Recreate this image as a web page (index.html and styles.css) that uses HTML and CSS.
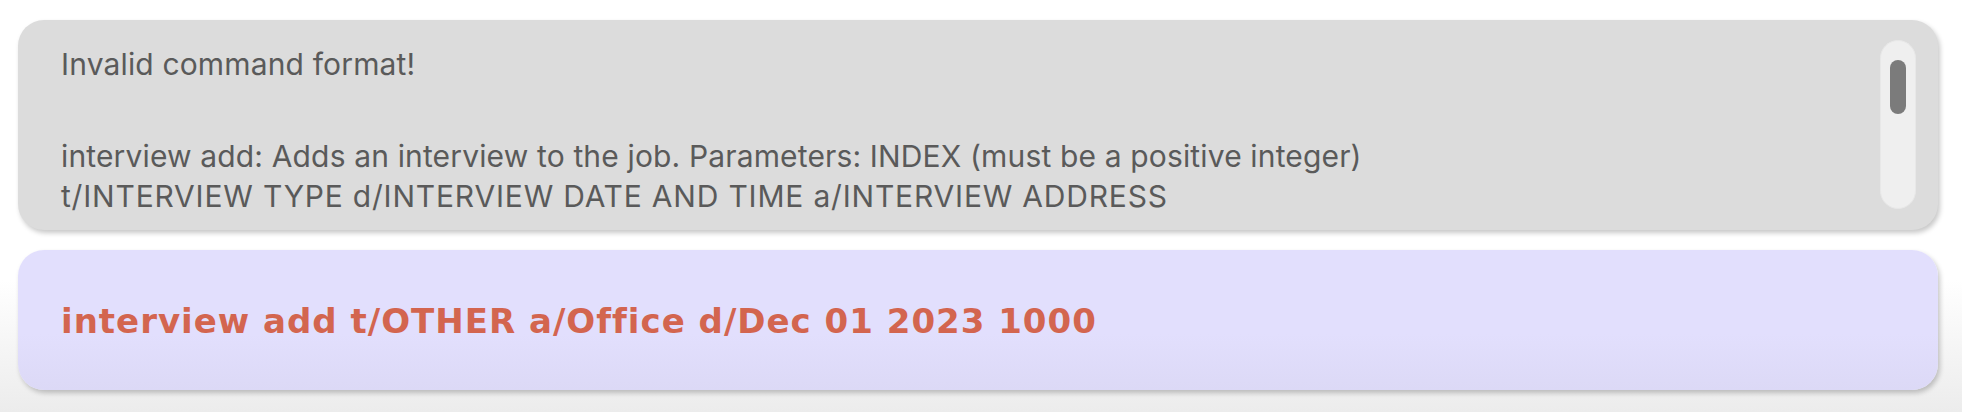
FILE: index.html
```html
<!DOCTYPE html>
<html>
<head>
<meta charset="utf-8">
<link rel="stylesheet" href="styles.css">
</head>
<body>
<div class="page">
  <div class="result-card">
    <div class="result-text">
      <div class="line first">Invalid command format!</div>
      <div class="line">interview add: Adds an interview to the job. Parameters: INDEX (must be a positive integer)</div>
      <div class="line caps">t/INTERVIEW TYPE d/INTERVIEW DATE AND TIME a/INTERVIEW ADDRESS</div>
    </div>
    <div class="scroll-track"><div class="scroll-thumb"></div></div>
  </div>
  <div class="command-card">
    <div class="command-text">interview add t/OTHER a/Office d/Dec 01 2023 1000</div>
  </div>
</div>
</body>
</html>
```
FILE: styles.css
```css
html, body {
  margin: 0;
  padding: 0;
}
body {
  width: 1962px;
  height: 412px;
  overflow: hidden;
  background: linear-gradient(to bottom, #ffffff 0px, #ffffff 280px, #ececec 412px);
}
.page {
  display: flex;
  flex-direction: column;
  gap: 20px;
  padding: 20px 24px 0 18px;
}
.result-card {
  height: 210px;
  box-sizing: border-box;
  background: #dcdcdc;
  border-radius: 26px;
  box-shadow: 2px 3px 5px rgba(0, 0, 0, 0.22);
  display: flex;
  padding: 0 22px 0 43px;
}
.result-text {
  flex: 1;
  padding-top: 24px;
  font-family: "Inter", "Roboto", sans-serif;
  font-size: 30px;
  line-height: 40px;
  color: #5a5a5a;
  letter-spacing: 0.15px;
}
.line.first {
  margin-bottom: 52px;
}
.line.caps {
  letter-spacing: 0.8px;
}
.scroll-track {
  width: 36px;
  margin: 20px 0 21px;
  box-sizing: border-box;
  background: #efefef;
  border: 1px solid #e8e8e8;
  border-radius: 18px;
  padding: 19px 9px 0;
}
.scroll-thumb {
  height: 54px;
  background: #7b7b7b;
  border-radius: 8px;
}
.command-card {
  height: 140px;
  box-sizing: border-box;
  background: linear-gradient(to bottom, #e2dffd 0%, #e2dffd 60%, #dcd9f6 100%);
  border-radius: 26px;
  box-shadow: 2px 3px 5px rgba(0, 0, 0, 0.22);
  padding: 51px 0 0 43px;
}
.command-text {
  font-family: "DejaVu Sans", sans-serif;
  font-weight: bold;
  font-size: 34px;
  letter-spacing: 1px;
  color: #d3654f;
}
```
